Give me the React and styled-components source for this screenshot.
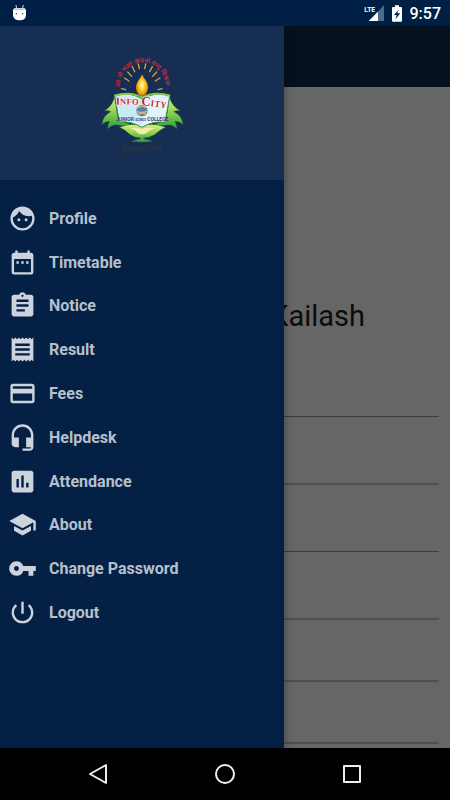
import React from "react";
import styled, { createGlobalStyle } from "styled-components";
import {
  MdAssessment,
  MdAssignment,
  MdDateRange,
  MdFace,
  MdPayment,
  MdPowerSettingsNew,
  MdReceipt,
  MdSchool,
  MdVpnKey,
} from "react-icons/md";

const GlobalStyle = createGlobalStyle`
  * {
    box-sizing: border-box;
  }

  body {
    margin: 0;
    background: #000;
    font-family: Roboto, "Liberation Sans", sans-serif;
  }
`;

const Screen = styled.div`
  display: flex;
  flex-direction: column;
  min-height: 100vh;
`;

const StatusBar = styled.header`
  display: flex;
  align-items: center;
  justify-content: space-between;
  height: 26px;
  padding: 0 9px 0 12px;
  background: #001f45;
  color: #fff;
`;

const StatusIcons = styled.div`
  display: flex;
  align-items: center;
  gap: 8px;
`;

const Clock = styled.span`
  padding-top: 2px;
  font-size: 16px;
  font-weight: 500;
  line-height: 20px;
`;

const Stage = styled.div`
  position: relative;
  display: flex;
  flex: 1;
  flex-direction: column;
  overflow: hidden;
  background: #fff;
`;

const AppBar = styled.div`
  height: 61px;
  background: #0f2c4d;
`;

const Page = styled.main`
  flex: 1;
  padding: 202px 11px 0;
`;

const StudentName = styled.h1`
  margin: 0;
  padding: 0 74px 73px 0;
  border-bottom: 1px solid #999;
  color: #222;
  font-size: 29px;
  font-weight: 400;
  line-height: 54px;
  text-align: right;
`;

const Field = styled.div`
  height: ${({ $height }) => $height}px;
  border-bottom: ${({ $thin }) => ($thin ? "1px solid #999" : "2px solid #c8c8c8")};
`;

const Scrim = styled.div`
  position: absolute;
  inset: 0;
  background: rgba(0, 0, 0, 0.6);
`;

const Drawer = styled.aside`
  position: absolute;
  top: 0;
  bottom: 0;
  left: 0;
  width: 284px;
  background: #042045;
  box-shadow: 1px 0 8px rgba(0, 0, 0, 0.3);
`;

const DrawerHeader = styled.div`
  display: flex;
  align-items: center;
  justify-content: center;
  height: 154px;
  background: #152e52;
`;

const Menu = styled.nav`
  display: flex;
  flex-direction: column;
  height: 438px;
  margin-top: 17px;
`;

const MenuItem = styled.a`
  display: flex;
  flex: 1;
  align-items: center;
  gap: 12px;
  padding-left: 8px;
  color: #b6c0cb;
  font-size: 16px;
  font-weight: 700;
  line-height: 20px;
  text-decoration: none;

  svg {
    margin-bottom: 1px;
    color: #cdd3dc;
  }
`;

const NavBar = styled.footer`
  display: flex;
  align-items: center;
  justify-content: center;
  gap: 79px;
  height: 52px;
  background: #000;
`;

const NavButton = styled.button`
  display: flex;
  align-items: center;
  justify-content: center;
  width: 48px;
  height: 48px;
  padding: 0;
  border: 0;
  background: none;
  color: #eee;
`;

const HeadsetIcon = ({ size }) => (
  <svg width={size} height={size} viewBox="0 0 24 24" fill="currentColor">
    <path d="M12 1c-4.970 0-9 4.030-9 9v7c0 1.660 1.340 3 3 3h3v-8H5v-2c0-3.870 3.130-7 7-7s7 3.130 7 7v2h-4v8h4v1h-7v2h6c1.660 0 3-1.340 3-3V10c0-4.970-4.030-9-9-9z" />
  </svg>
);

const menu = [
  { label: "Profile", Icon: MdFace },
  { label: "Timetable", Icon: MdDateRange },
  { label: "Notice", Icon: MdAssignment },
  { label: "Result", Icon: MdReceipt },
  { label: "Fees", Icon: MdPayment },
  { label: "Helpdesk", Icon: HeadsetIcon },
  { label: "Attendance", Icon: MdAssessment },
  { label: "About", Icon: MdSchool },
  { label: "Change Password", Icon: MdVpnKey },
  { label: "Logout", Icon: MdPowerSettingsNew },
];

const DroidIcon = () => (
  <svg width="15" height="18" viewBox="0 0 45 54" fill="#fff">
    <path d="M12 3l2 12M34 3l-3 12" stroke="#d5dce6" strokeWidth="3" />
    <path d="M3 20q0-8 9-8h21q9 0 9 8v14q0 15-19 15T3 34z" />
    <path d="M6 18q2-5 8-5h17q6 0 8 5z" fill="#b9c6d6" />
    <circle cx="13" cy="29" r="2" fill="#001f45" />
    <circle cx="32" cy="29" r="2" fill="#001f45" />
  </svg>
);

const SignalIcon = () => (
  <svg width="20" height="18" viewBox="0 0 60 54">
    <path d="M60 4v47H14z" fill="#4d6b8c" />
    <path d="M0 0h34v27H0z" fill="#001f45" />
    <path d="M42 23v28H14l24-24z" fill="#fff" />
    <text x="1" y="23" fill="#fff" fontSize="20" fontWeight="700" fontFamily="Roboto, sans-serif">
      LTE
    </text>
  </svg>
);

const BatteryIcon = () => (
  <svg width="10" height="17" viewBox="0 0 30 51">
    <path d="M9 1h12v5h6q3 0 3 3v38q0 3-3 3H3q-3 0-3-3V9q0-3 3-3h6z" fill="#fff" />
    <path d="M20 14L6 30h8l-4 13 15-18h-9z" fill="#001f45" />
  </svg>
);

const rays = [
  "M103 96l14 9",
  "M113 78l12 13",
  "M127 62l7 15",
  "M145 54l3 14",
  "M167 54l-3 14",
  "M187 62l-8 15",
  "M200 78l-12 13",
  "M210 96l-14 9",
  "M95 128l12 3",
  "M216 128l-12 3",
];

const CollegeLogo = () => (
  <svg width="105" height="115" viewBox="0 0 315 345" role="img" aria-label="Info City Junior Science College">
    <defs>
      <path id="motto" d="M89 124A69 75 0 0 1 227 124" />
      <path id="title" d="M78 176Q158 172 252 192" />
      <linearGradient id="leaf" x1="0" x2="0" y1="0" y2="1">
        <stop offset="0" stopColor="#e4ee7c" />
        <stop offset="0.5" stopColor="#8ccf4e" />
        <stop offset="1" stopColor="#2c9c3c" />
      </linearGradient>
      <radialGradient id="flame">
        <stop offset="0" stopColor="#fffbd0" />
        <stop offset="0.4" stopColor="#ffd83a" />
        <stop offset="1" stopColor="#d98208" />
      </radialGradient>
    </defs>
    <text fill="#bd2a43" fontSize="19" fontWeight="700" fontFamily="Noto Sans Devanagari, Noto Sans, sans-serif">
      <textPath href="#motto">आ नो भद्राः क्रतवो यन्तु विश्वतः</textPath>
    </text>
    <g stroke="#d6a045" strokeWidth="4" strokeLinecap="round">
      {rays.map((d) => (
        <path key={d} d={d} />
      ))}
    </g>
    <path d="M156 85C164 102 177 112 174 128Q170 147 156 150Q142 147 138 128C136 112 149 102 156 85z" fill="url(#flame)" />
    <g fill="url(#leaf)" stroke="#328d3d" strokeWidth="1">
      <path d="M73 153C69 174 58 185 44 194Q58 193 63 197Q39 208 36 235Q49 223 59 226Q52 238 54 248Q68 232 90 238Q108 241 121 235Q101 228 85 225z" />
      <path d="M239 153C243 174 255 185 270 194Q256 193 251 197Q275 208 279 235Q265 223 254 226Q262 238 260 248Q246 232 224 238Q206 241 193 235Q213 228 228 225z" />
      <path d="M89 244Q126 229 156 240Q188 229 226 244Q208 252 193 266Q176 276 160 276L162 279Q176 281 187 286Q156 290 126 286Q138 281 151 279L153 276Q136 276 121 266Q106 251 89 244z" />
    </g>
    <path d="M119 247Q138 242 156 249Q174 242 195 247Q177 252 171 260Q156 270 142 260Q136 251 119 247z" fill="#f1efae" />
    <path d="M74 146Q121 137 156 159Q193 137 240 146L225 229Q188 224 156 244Q124 225 88 228z" fill="#dff4fa" stroke="#319656" strokeWidth="3" />
    <path d="M80 150Q121 142 156 164V238Q126 221 93 224z" fill="#b7e4f2" opacity="0.6" />
    <path d="M73 150Q121 135 156 155Q193 135 240 150" fill="none" stroke="#8bc34a" strokeWidth="6" />
    <circle cx="156" cy="194" r="17" fill="#577fab" />
    <path d="M141 186q14-10 28-1M139 196q17 8 34-1M145 205q11-7 22 0" fill="none" stroke="#d0b478" strokeWidth="5" />
    <text fill="#cf1b3f" stroke="#fff" strokeWidth="3" paintOrder="stroke" fontSize="32" fontWeight="700" fontFamily="Liberation Serif, serif">
      <textPath href="#title">
        I<tspan fontSize="26">NFO</tspan> <tspan fontSize="39">C</tspan>
        <tspan fontSize="27">ITY</tspan>
      </textPath>
    </text>
    <text x="157" y="226" fill="#4a3679" textAnchor="middle" fontSize="15" fontWeight="700" fontFamily="Roboto, sans-serif">
      JUNIOR <tspan fontSize="8">SCIENCE</tspan> COLLEGE
    </text>
    <text x="157" y="315" fill="#30343f" textAnchor="middle" fontSize="23" fontWeight="700" fontFamily="Liberation Sans, sans-serif">
      Since-2004
    </text>
  </svg>
);

const App = () => {
  return (
    <Screen>
      <GlobalStyle />
      <StatusBar>
        <DroidIcon />
        <StatusIcons>
          <SignalIcon />
          <BatteryIcon />
          <Clock>9:57</Clock>
        </StatusIcons>
      </StatusBar>
      <Stage>
        <AppBar />
        <Page>
          <StudentName>Kailash</StudentName>
          <Field $height={68} />
          <Field $height={67} $thin />
          <Field $height={68} />
          <Field $height={62} />
          <Field $height={62} />
        </Page>
        <Scrim />
        <Drawer>
          <DrawerHeader>
            <CollegeLogo />
          </DrawerHeader>
          <Menu>
            {menu.map(({ label, Icon }) => (
              <MenuItem key={label} href="#">
                <Icon size={29} />
                {label}
              </MenuItem>
            ))}
          </Menu>
        </Drawer>
      </Stage>
      <NavBar>
        <NavButton aria-label="Back">
          <svg width="22" height="22" viewBox="0 0 22 22" fill="none" stroke="currentColor" strokeWidth="2" strokeLinejoin="round">
            <path d="M19 2v18L3 11z" />
          </svg>
        </NavButton>
        <NavButton aria-label="Home">
          <svg width="22" height="22" viewBox="0 0 22 22" fill="none" stroke="currentColor" strokeWidth="2">
            <circle cx="11" cy="11" r="9" />
          </svg>
        </NavButton>
        <NavButton aria-label="Recent apps">
          <svg width="22" height="22" viewBox="0 0 22 22" fill="none" stroke="currentColor" strokeWidth="2" strokeLinejoin="round">
            <path d="M3 3h16v16H3z" />
          </svg>
        </NavButton>
      </NavBar>
    </Screen>
  );
};

export default App;
